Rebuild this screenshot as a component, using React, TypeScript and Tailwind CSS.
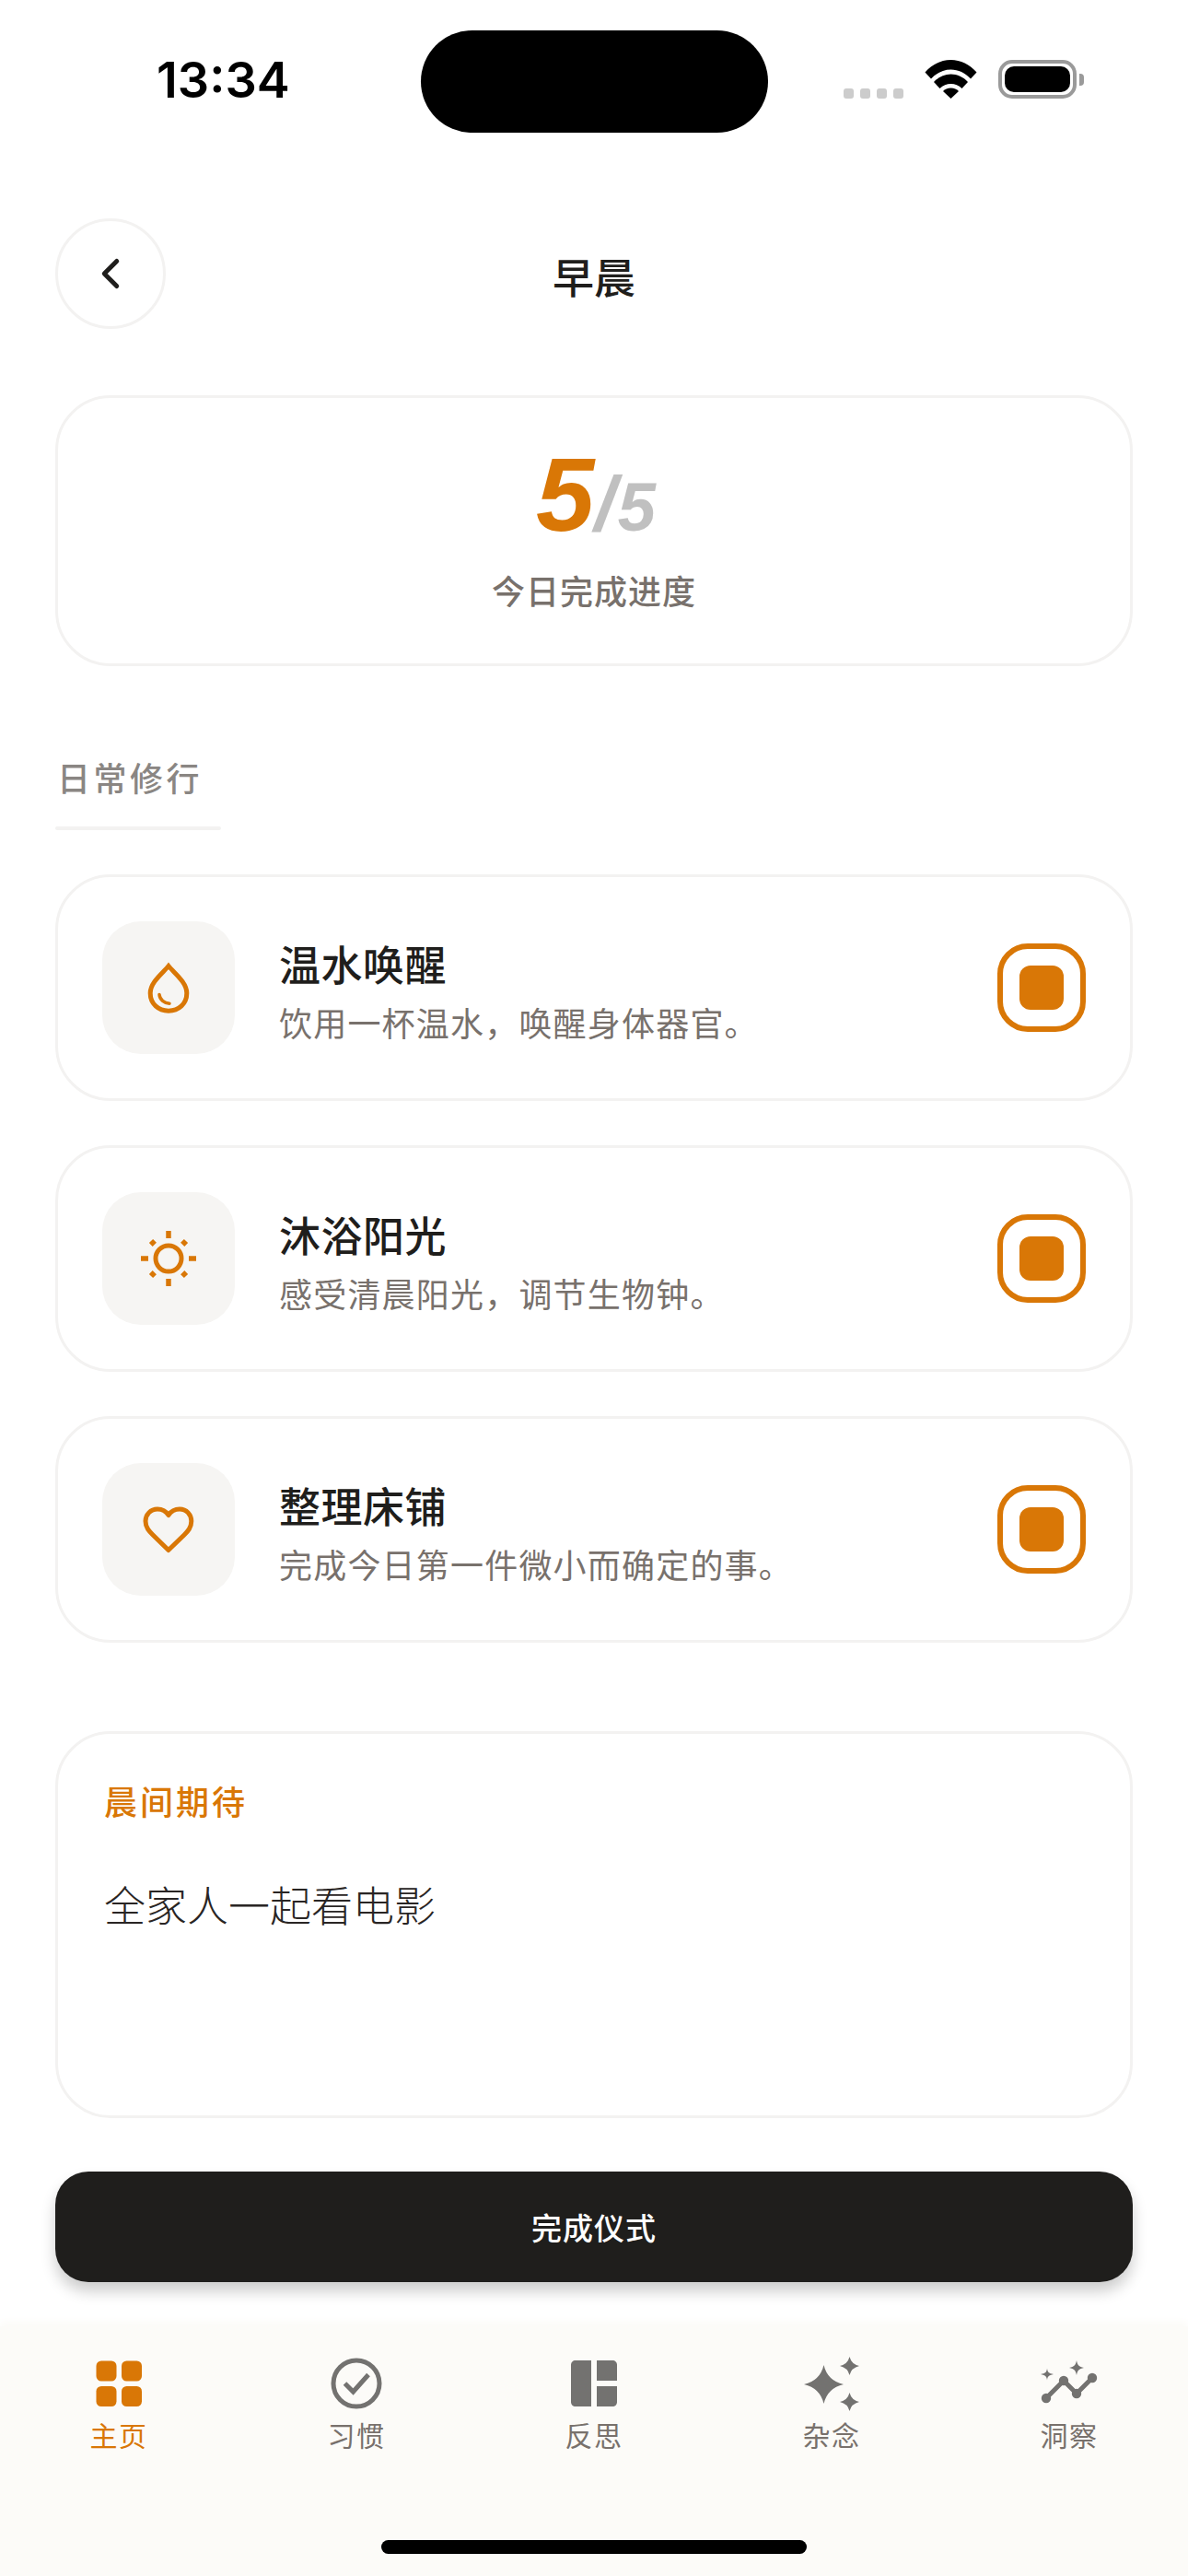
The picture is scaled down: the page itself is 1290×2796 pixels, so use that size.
import { ChevronLeft } from "lucide-react";
import type { ReactNode } from "react";

const orange = "#d97706";

function Drop() {
  return (
    <svg width="60" height="60" viewBox="0 0 60 60" fill="none" stroke={orange}>
      <path
        d="M30 6.5C36 14 49.8 24 49.8 36C49.8 47.5 41 55.2 30 55.2C19 55.2 10.2 47.5 10.2 36C10.2 24 24 14 30 6.5Z"
        strokeWidth="5"
      />
      <path d="M20 37.5C20.5 43 25.5 47 31 47.2" strokeWidth="3.5" strokeLinecap="round" />
    </svg>
  );
}

function Sun() {
  return (
    <svg width="60" height="60" viewBox="0 0 60 60" fill="none" stroke={orange}>
      <circle cx="30" cy="30" r="14" strokeWidth="5" />
      <path d="M30 0V8M30 52V60M0 30H8M52 30H60" strokeWidth="5.5" />
      <path d="M11 11L14.8 14.8M49 11L45.2 14.8M11 49L14.8 45.2M49 49L45.2 45.2" strokeWidth="6" />
    </svg>
  );
}

function Heart() {
  return (
    <svg width="60" height="60" viewBox="0 0 60 60" fill="none" stroke={orange} strokeWidth="5" strokeLinejoin="round">
      <path d="M29.9 14.5C27 10 22.5 8 18 8C10.5 8 5 14 5 21C5 28 9 32 13 36L29.9 52.5L47 36C51 32 54.8 28 54.8 21C54.8 14 49.5 8 42 8C37 8 33 10 29.9 14.5Z" />
    </svg>
  );
}

function GridIcon() {
  return (
    <svg width="60" height="60" viewBox="0 0 60 60" fill={orange}>
      <rect x="5.5" y="5.5" width="22" height="22" rx="5.5" />
      <rect x="33" y="5.5" width="22" height="22" rx="5.5" />
      <rect x="5.5" y="33" width="22" height="22" rx="5.5" />
      <rect x="33" y="33" width="22" height="22" rx="5.5" />
    </svg>
  );
}

function CheckIcon() {
  return (
    <svg width="60" height="60" viewBox="0 0 60 60" fill="none" stroke="#737270" strokeWidth="5">
      <circle cx="30" cy="30" r="25" />
      <path d="M17.5 30L26.5 39L43 20.5" strokeWidth="5" />
    </svg>
  );
}

function PanelIcon() {
  return (
    <svg width="60" height="60" viewBox="0 0 60 60" fill="#737270">
      <path d="M10 5H27V55H10C7 55 5 53 5 50V10C5 7 7 5 10 5Z" />
      <path d="M33 5H50C53 5 55 7 55 10V27H33Z" />
      <path d="M33 33H55V50C55 53 53 55 50 55H33Z" />
    </svg>
  );
}

function SparkIcon() {
  return (
    <svg width="60" height="60" viewBox="0 0 60 60" fill="#737270">
      <path d="M21.5 10Q25.5 27 43 31Q25.5 35 21.5 52Q17.5 35 0 31Q17.5 27 21.5 10Z" />
      <path d="M49.5 1Q51.5 9 60 11Q51.5 13 49.5 21Q47.5 13 39 11Q47.5 9 49.5 1Z" />
      <path d="M49.5 40Q51.5 48 60 50Q51.5 52 49.5 60Q47.5 52 39 50Q47.5 48 49.5 40Z" />
    </svg>
  );
}

function InsightIcon() {
  return (
    <svg width="60" height="60" viewBox="0 0 60 60" fill="#737270" className="overflow-visible">
      <path d="M5 46L24 27L38 41L55 24" fill="none" stroke="#737270" strokeWidth="5" />
      <circle cx="5" cy="46" r="5.2" />
      <circle cx="24" cy="27" r="5.2" />
      <circle cx="38" cy="41" r="5.2" />
      <circle cx="55" cy="24" r="5.2" />
      <path d="M38 5C39 10 40.5 12 46 13C40.5 14 39 16 38 21C37 16 35.5 14 30 13C35.5 12 37 10 38 5Z" />
      <path d="M6 13.5C6.4 17.5 7.5 19 13 20C7.5 21 6.4 22.5 6 26.5C5.6 22.5 4.5 21 -1 20C4.5 19 5.6 17.5 6 13.5Z" />
    </svg>
  );
}

const rituals: { title: string; desc: string; icon: ReactNode }[] = [
  { title: "温水唤醒", desc: "饮用一杯温水，唤醒身体器官。", icon: <Drop /> },
  { title: "沐浴阳光", desc: "感受清晨阳光，调节生物钟。", icon: <Sun /> },
  { title: "整理床铺", desc: "完成今日第一件微小而确定的事。", icon: <Heart /> },
];

const tabs: { label: string; icon: ReactNode; active?: boolean }[] = [
  { label: "主页", icon: <GridIcon />, active: true },
  { label: "习惯", icon: <CheckIcon /> },
  { label: "反思", icon: <PanelIcon /> },
  { label: "杂念", icon: <SparkIcon /> },
  { label: "洞察", icon: <InsightIcon /> },
];

export default function App() {
  return (
    <div className="w-[1290px] h-[2796px] bg-white flex flex-col overflow-hidden font-['Noto_Sans_CJK_SC',sans-serif] text-[#1f1e1c]">
      {/* status bar */}
      <div className="h-[237px] shrink-0 grid grid-cols-[457px_377px_456px] items-start pt-[33px]">
        <div className="h-[111px] flex items-center pl-[170px] pb-[3px]">
          <span className="font-['Inter',sans-serif] font-semibold text-[54px] leading-none text-black">13:34</span>
        </div>
        <div className="h-[111px] bg-black rounded-full" />
        <div className="h-[111px] flex items-start pt-[32px] pl-[82px]">
          <div className="flex gap-[7px] mt-[31px]">
            {[0, 1, 2, 3].map((i) => (
              <div key={i} className="w-[11px] h-[11px] rounded-[3px] bg-[#cccccc]" />
            ))}
          </div>
          <svg width="57" height="42" viewBox="0 0 57 42" fill="black" className="ml-[23px]">
            <path d="M0.5 13.5C8 5 18 0 28.5 0C39 0 49 5 56.5 13.5L50 20.5C44 14 36.5 10.5 28.5 10.5C20.5 10.5 13 14 7 20.5Z" />
            <path d="M10 24C15 18.5 21.5 15.5 28.5 15.5C35.5 15.5 42 18.5 47 24L40.5 31C37 27.5 33 26 28.5 26C24 26 20 27.5 16.5 31Z" />
            <path d="M20 34C22 32 25 30.5 28.5 30.5C32 30.5 35 32 37 34L28.5 42Z" />
          </svg>
          <div className="ml-[23px] flex items-center">
            <div className="w-[85px] h-[42px] rounded-[15px] border-[4px] border-[#9a9a9a] p-[3px]">
              <div className="w-full h-full rounded-[10px] bg-black" />
            </div>
            <div className="ml-[3px] w-[5px] h-[13px] rounded-r-[4px] bg-[#9a9a9a]" />
          </div>
        </div>
      </div>

      <div className="flex-1 flex flex-col px-[60px]">
        {/* header */}
        <div className="grid grid-cols-[120px_1fr_120px] items-center h-[120px] shrink-0">
          <button className="w-[120px] h-[120px] rounded-full border-[3px] border-[#f3f2f1] flex items-center justify-center text-[#1f1e1c]">
            <ChevronLeft size={54} strokeWidth={2.2} />
          </button>
          <div className="text-center text-[45px] leading-[60px] font-medium pt-[6px]">早晨</div>
          <div />
        </div>

        {/* progress card */}
        <div className="mt-[72px] h-[294px] shrink-0 rounded-[60px] border-[3px] border-[#f3f2f1] flex flex-col items-center pt-[51px]">
          <div className="font-['Liberation_Sans',sans-serif] font-bold italic flex items-baseline h-[108px] leading-[108px] pl-[4px]">
            <span className="text-[114px] text-[#d97706]">5</span>
            <span className="text-[84px] text-[#c0c0c0] mr-[2px]">/</span>
            <span className="text-[74px] text-[#c0c0c0]">5</span>
          </div>
          <div className="mt-[22px] text-[36px] leading-[54px] font-medium tracking-[1px] text-[#78716c]">今日完成进度</div>
        </div>

        {/* section title */}
        <div className="mt-[93px] pl-[2px] text-[36px] leading-[54px] tracking-[3.5px] font-medium text-[#8a8683]">日常修行</div>
        <div className="mt-[27px] w-[180px] h-[4px] rounded-full bg-[#f3f2f1]" />

        {/* rituals */}
        <div className="mt-[48px] flex flex-col gap-[48px]">
          {rituals.map((r) => (
            <div key={r.title} className="h-[246px] rounded-[60px] border-[3px] border-[#f3f2f1] flex items-center pl-[48px] pr-[48px]">
              <div className="w-[144px] h-[144px] rounded-[42px] bg-[#f6f5f3] flex items-center justify-center shrink-0">
                {r.icon}
              </div>
              <div className="ml-[48px] flex-1 pt-[8px]">
                <div className="text-[45px] leading-[60px] font-medium tracking-[0.5px]">{r.title}</div>
                <div className="mt-[6px] text-[36px] leading-[54px] tracking-[1.2px] text-[#78716c]">{r.desc}</div>
              </div>
              <div className="w-[96px] h-[96px] rounded-[33px] border-[6px] border-[#d97706] flex items-center justify-center shrink-0">
                <div className="w-[48px] h-[48px] rounded-[12px] bg-[#d97706]" />
              </div>
            </div>
          ))}
        </div>

        {/* morning note */}
        <div className="mt-[96px] h-[420px] shrink-0 rounded-[60px] border-[3px] border-[#f3f2f1] pl-[50px] pt-[48px]">
          <div className="text-[36px] leading-[48px] tracking-[3px] font-medium text-[#d97706]">晨间期待</div>
          <div className="mt-[59px] text-[45px] leading-[60px] font-light text-[#292524]">全家人一起看电影</div>
        </div>

        {/* submit */}
        <button className="mt-[58px] h-[120px] shrink-0 rounded-[36px] bg-[#1f1e1c] text-white text-[33px] leading-[48px] font-medium tracking-[1px] shadow-[0_10px_16px_rgba(0,0,0,0.2)]">
          完成仪式
        </button>
      </div>

      {/* tab bar */}
      <div className="h-[271px] shrink-0 bg-[#fcfbf8] shadow-[0_-6px_8px_#fcfbf8] flex flex-col">
        <div className="grid grid-cols-5 pt-[32px]">
          {tabs.map((t) => (
            <div key={t.label} className="flex flex-col items-center">
              {t.icon}
              <span className={`mt-[4px] text-[30px] leading-[42px] tracking-[1.5px] ${t.active ? "text-[#d97706]" : "text-[#78716c]"}`}>{t.label}</span>
            </div>
          ))}
        </div>
        <div className="mt-auto mb-[24px] mx-auto w-[462px] h-[15px] rounded-full bg-black" />
      </div>
    </div>
  );
}
